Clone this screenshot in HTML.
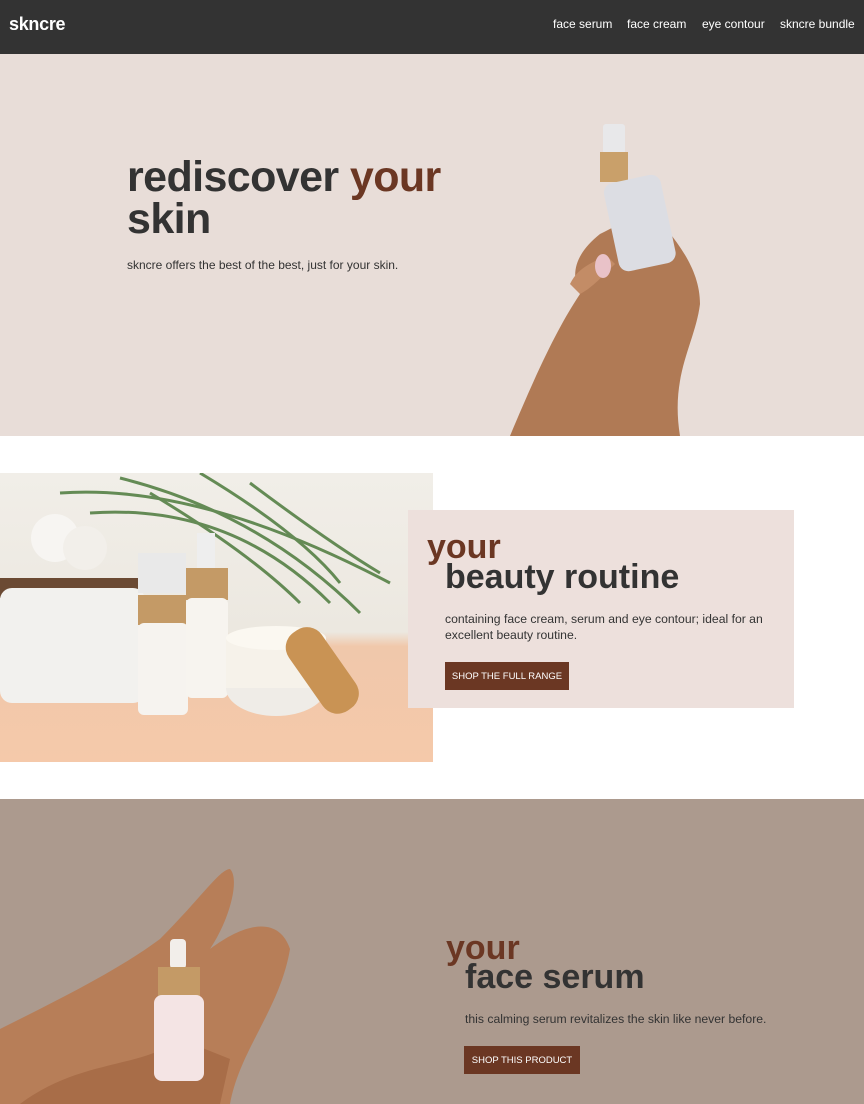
<!DOCTYPE html>
<html><head><meta charset="utf-8"><style>
*{margin:0;padding:0;box-sizing:border-box}
body{width:864px;height:1104px;overflow:hidden;font-family:"Liberation Sans",sans-serif;background:#fff;position:relative}
.abs{position:absolute}
nav{position:absolute;left:0;top:0;width:864px;height:54px;background:#333}
.logo{left:9px;top:14px;color:#fff;font-weight:bold;font-size:18px;letter-spacing:-0.3px}
.nav a{position:absolute;top:17px;color:#fff;font-size:12px;text-decoration:none}
.br{color:#6b3723}
.btn{background:#6b3723;color:#fff;font-size:9.5px;display:flex;align-items:center;justify-content:center}
p{color:#333}
</style></head><body>
<nav><div class="abs logo">skncre</div>
<div class="nav"><a style="left:553px">face serum</a><a style="left:627px">face cream</a><a style="left:702px">eye contour</a><a style="left:780px">skncre bundle</a></div></nav>

<div class="abs" style="left:0;top:54px;width:864px;height:382px;background:#e8ddd8;overflow:hidden">
 <div class="abs" style="left:127px;top:102px;font-size:43px;line-height:42px;font-weight:bold;color:#333;letter-spacing:-0.6px">rediscover <span class="br">your</span><br>skin</div>
 <p class="abs" style="left:127px;top:204px;font-size:12px">skncre offers the best of the best, just for your skin.</p>
 <svg class="abs" style="left:500px;top:60px" width="220" height="322">
  <path d="M10 322 C40 250 60 210 80 180 C70 160 75 140 100 120 C120 110 140 100 150 95 C170 120 200 150 200 190 C195 230 170 260 180 322 Z" fill="#b07a55"/>
  <path d="M70 170 C80 150 95 150 105 140 L115 150 C100 165 90 175 80 180Z" fill="#c38c66"/>
  <rect x="103" y="10" width="22" height="30" rx="3" fill="#e8e8ea"/>
  <rect x="100" y="38" width="28" height="30" fill="#c9a06a"/>
  <rect x="111" y="64" width="58" height="90" rx="10" fill="#dcdde3" transform="rotate(-12 140 110)"/>
  <ellipse cx="103" cy="152" rx="8" ry="12" fill="#e9c2c8"/>
 </svg>
</div>

<div class="abs" style="left:0;top:473px;width:433px;height:289px;background:linear-gradient(180deg,#f1eee8 0%,#ece8e0 55%,#f0c8ab 60%,#f5c9aa 100%);overflow:hidden">
 <svg width="433" height="289">
  <g stroke="#4c7a3c" stroke-width="3" fill="none" opacity="0.85">
   <path d="M60 20 Q200 10 390 110"/><path d="M120 5 Q260 40 360 140"/><path d="M90 40 Q230 30 330 130"/><path d="M200 0 Q300 60 340 110"/><path d="M150 20 Q250 80 300 130"/><path d="M250 10 Q330 70 380 100"/>
  </g>
  <circle cx="55" cy="65" r="24" fill="#f7f5f2"/><circle cx="85" cy="75" r="22" fill="#f2efea"/><rect x="0" y="105" width="140" height="20" fill="#6b4a33"/>
  <rect x="0" y="115" width="145" height="115" rx="12" fill="#f2f1ee"/>
  <rect x="138" y="80" width="48" height="40" fill="#e9e9e9"/><rect x="138" y="122" width="48" height="30" fill="#c49a66"/><rect x="138" y="150" width="50" height="92" rx="6" fill="#f6f3ef"/>
  <rect x="197" y="60" width="18" height="40" fill="#eee"/><rect x="186" y="95" width="42" height="32" fill="#c49a66"/><rect x="186" y="125" width="42" height="100" rx="6" fill="#f7f4ef"/>
  <ellipse cx="276" cy="215" rx="50" ry="28" fill="#efece7"/><rect x="226" y="165" width="100" height="50" fill="#f6f2ea"/><ellipse cx="276" cy="165" rx="50" ry="12" fill="#fbf8f1"/>
  <rect x="302" y="150" width="40" height="95" rx="18" fill="#c99354" transform="rotate(-35 322 197)"/>
 </svg>
</div>
<div class="abs" style="left:408px;top:510px;width:386px;height:198px;background:#ede0dc">
 <div class="abs br" style="left:19px;top:20px;font-size:34px;font-weight:bold;line-height:34px">your</div>
 <div class="abs" style="left:37px;top:48px;font-size:34px;font-weight:bold;line-height:38px;color:#333;letter-spacing:0px">beauty routine</div>
 <p class="abs" style="left:37px;top:101px;font-size:12.2px;line-height:16px;width:345px">containing face cream, serum and eye contour; ideal for an excellent beauty routine.</p>
 <div class="abs btn" style="left:37px;top:152px;width:124px;height:28px">SHOP THE FULL RANGE</div>
</div>

<div class="abs" style="left:0;top:799px;width:864px;height:305px;background:#ac9a8e;overflow:hidden">
 <svg class="abs" style="left:0;top:60px" width="310" height="245">
  <path d="M0 245 L0 170 C60 140 120 110 160 80 C200 40 220 10 230 10 C240 20 230 60 210 90 C250 60 280 60 290 90 C280 150 240 190 230 245Z" fill="#b77e58"/>
  <path d="M20 245 C80 200 140 210 180 180 L230 200 L220 245Z" fill="#a86d48"/>
  <rect x="170" y="80" width="16" height="30" rx="4" fill="#f2eeea"/><rect x="158" y="108" width="42" height="30" fill="#c49a66"/><rect x="154" y="136" width="50" height="86" rx="8" fill="#f4e4e4"/>
 </svg>
 <div class="abs br" style="left:446px;top:132px;font-size:34px;font-weight:bold;line-height:34px">your</div>
 <div class="abs" style="left:465px;top:159px;font-size:34px;font-weight:bold;line-height:38px;color:#333;letter-spacing:0px">face serum</div>
 <p class="abs" style="left:465px;top:213px;font-size:12.2px">this calming serum revitalizes the skin like never before.</p>
 <div class="abs btn" style="left:464px;top:247px;width:116px;height:28px">SHOP THIS PRODUCT</div>
</div>
</body></html>
